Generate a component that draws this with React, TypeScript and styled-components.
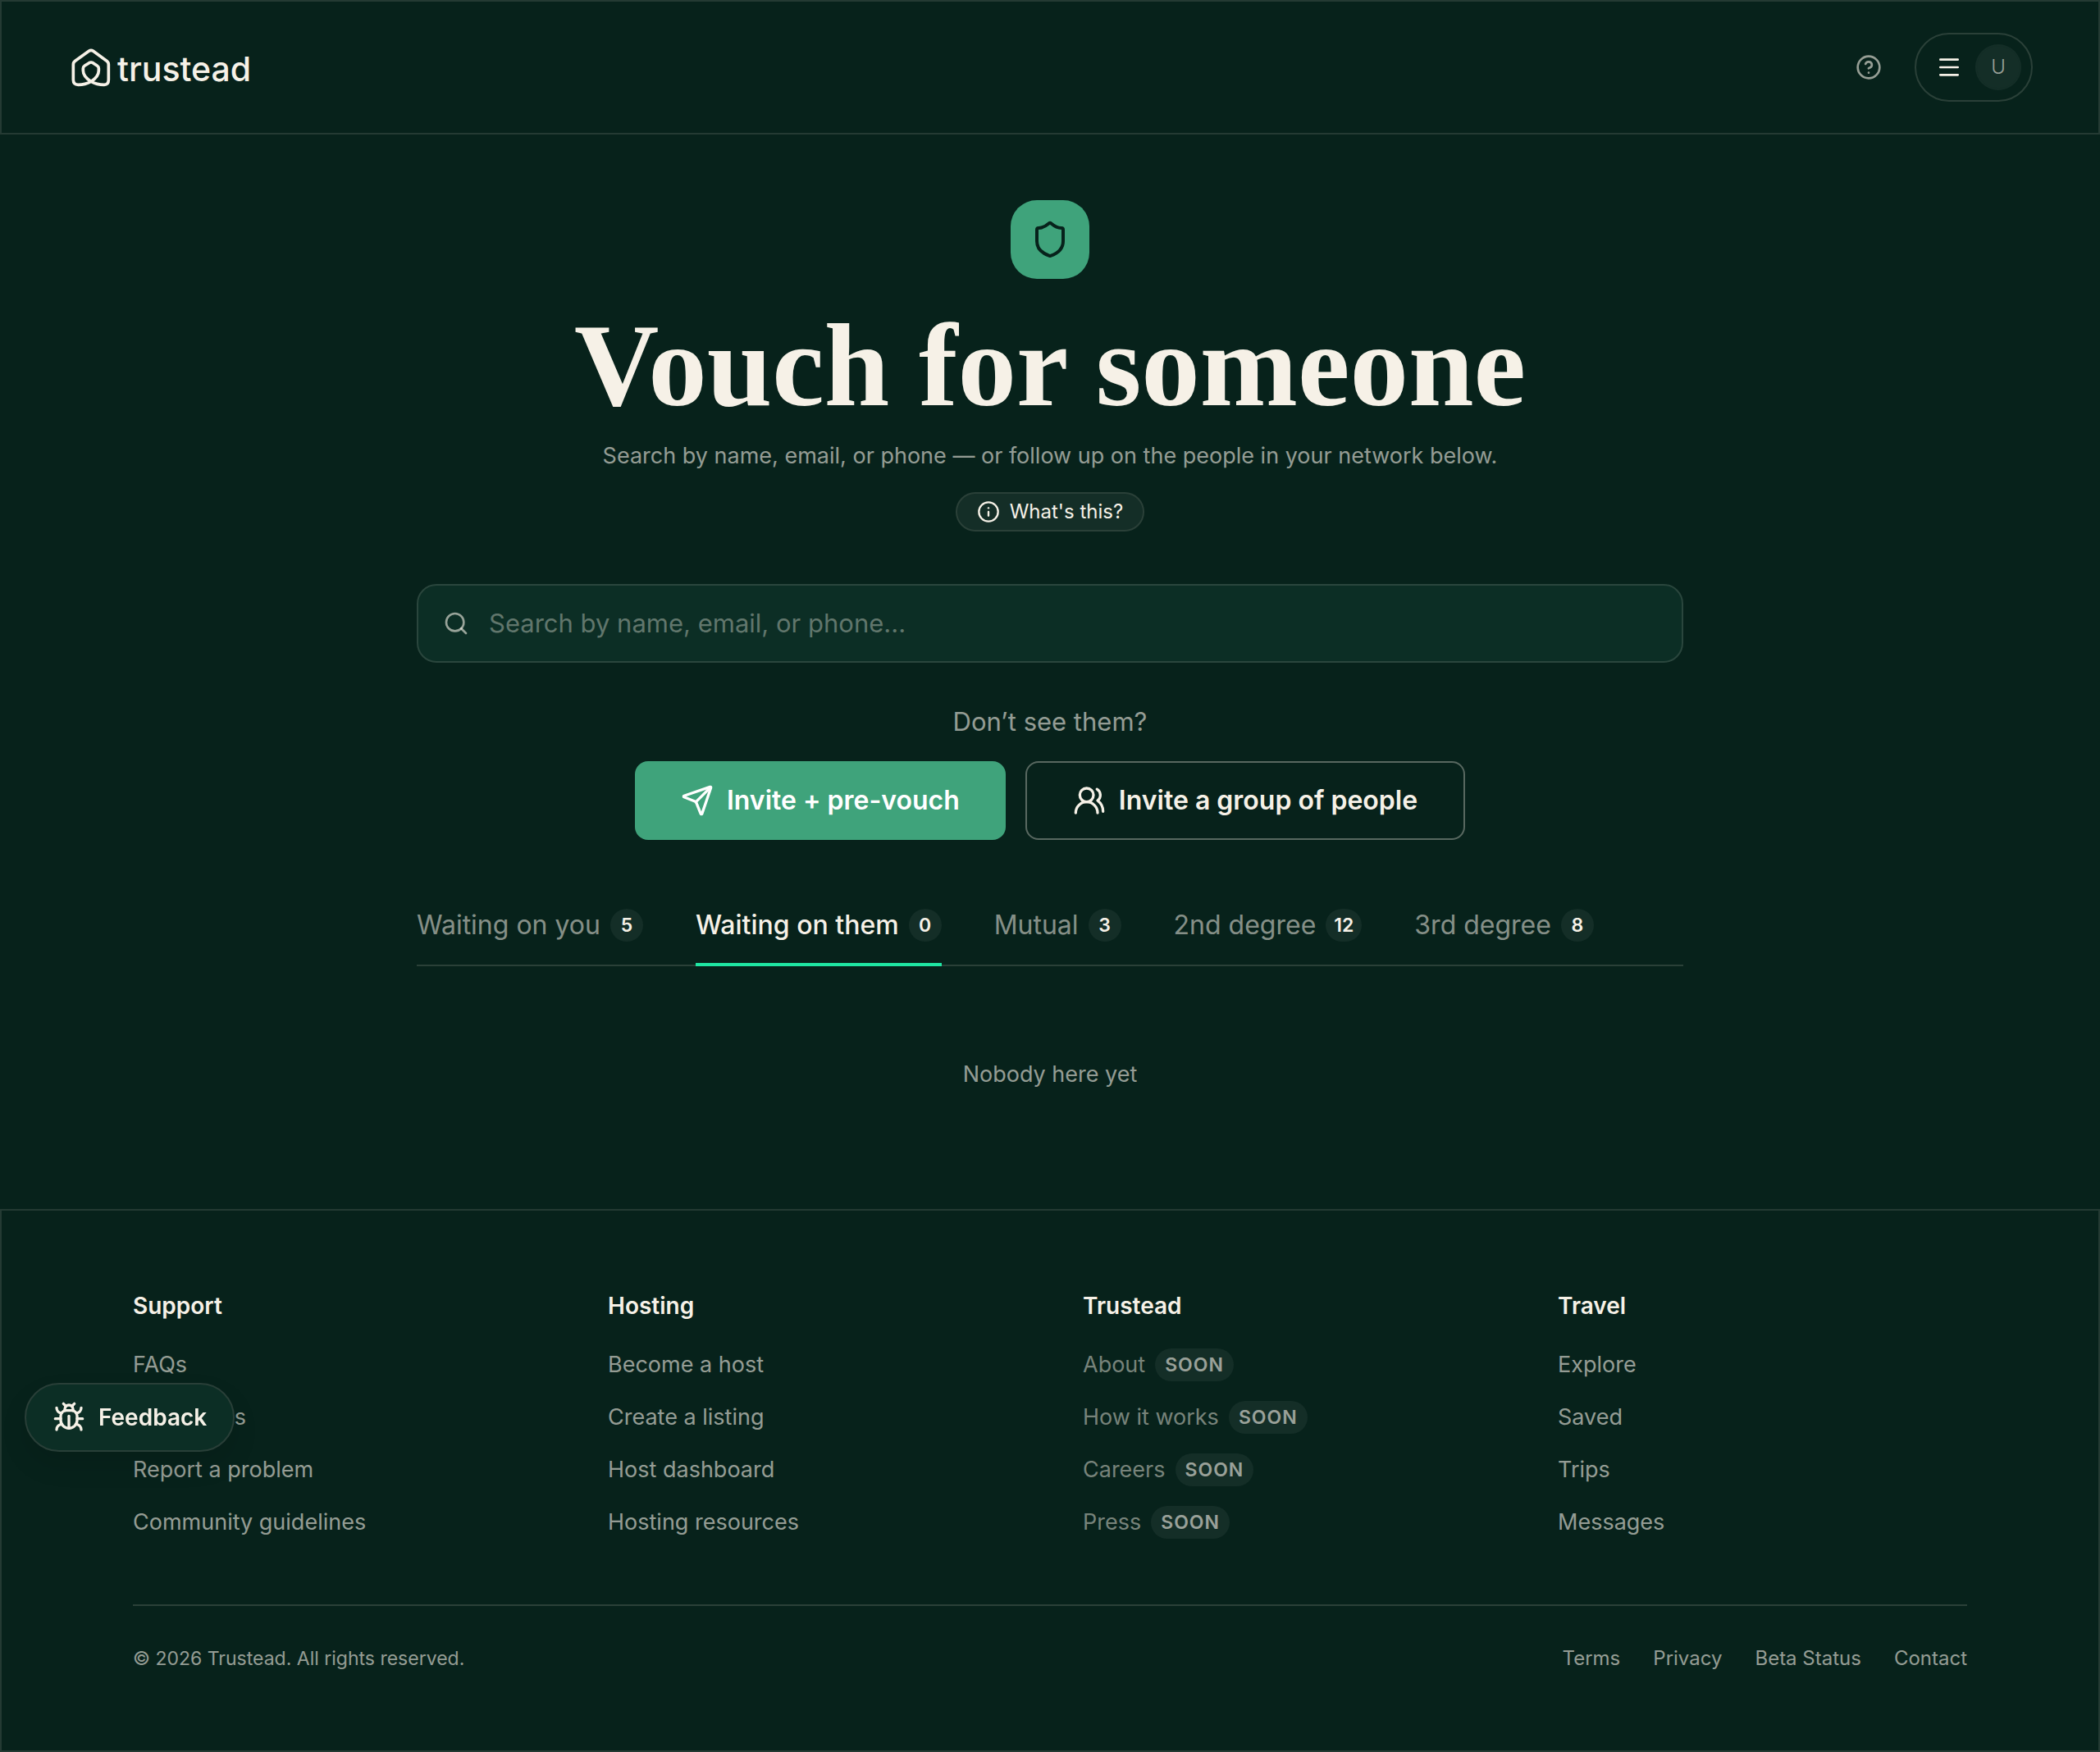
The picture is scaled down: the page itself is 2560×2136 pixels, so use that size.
import React, { useState } from "react";
import styled, { createGlobalStyle, css } from "styled-components";
import {
  Bug,
  CircleQuestionMark,
  Info,
  Menu,
  Search,
  Send,
  Shield,
  UsersRound,
} from "lucide-react";

const color = {
  page: "#07221b",
  surface: "#0c2e25",
  cream: "#f6f1e7",
  muted: "rgba(246, 241, 231, 0.6)",
  faint: "rgba(246, 241, 231, 0.48)",
  placeholder: "#61766c",
  line: "rgba(246, 241, 231, 0.12)",
  control: "rgba(246, 241, 231, 0.15)",
  lineStrong: "rgba(246, 241, 231, 0.34)",
  chip: "rgba(246, 241, 231, 0.06)",
  green: "#3fa37b",
  accent: "#1fe6a3",
};

const GlobalStyle = createGlobalStyle`
  *, *::before, *::after { box-sizing: border-box; }
  body {
    margin: 0;
    background: ${color.page};
    color: ${color.cream};
    font-family: Inter, "Open Sans", sans-serif;
    font-size: 27px;
    line-height: 40px;
  }
  button, input { font: inherit; color: inherit; }
  button { cursor: pointer; }
  svg { display: block; flex: none; }
`;

const Page = styled.div`
  display: flex;
  flex-direction: column;
  min-height: 100vh;
`;

const Header = styled.header`
  display: flex;
  align-items: center;
  justify-content: space-between;
  padding: 38px 80px 38px 85px;
  border: 2px solid ${color.line};
`;

const Brand = styled.a`
  display: flex;
  align-items: flex-end;
  gap: 8px;
  color: ${color.cream};
  text-decoration: none;
`;

const BrandName = styled.span`
  font-size: 41px;
  font-weight: 500;
  line-height: 44px;
`;

const HeaderActions = styled.div`
  display: flex;
  align-items: center;
  gap: 24px;
`;

const IconButton = styled.button`
  display: flex;
  padding: 16px;
  border: 0;
  border-radius: 32px;
  background: none;
  color: ${color.muted};
`;

const AccountButton = styled.button`
  display: flex;
  align-items: center;
  gap: 16px;
  padding: 12px 12px 12px 24px;
  border: 2px solid ${color.control};
  border-radius: 42px;
  background: none;
`;

const Avatar = styled.span`
  width: 56px;
  height: 56px;
  border: 2px solid ${color.chip};
  border-radius: 50%;
  background: ${color.chip};
  background-clip: padding-box;
  color: ${color.muted};
  font-size: 24px;
  font-weight: 300;
  line-height: 52px;
  text-align: center;
`;

const Main = styled.main`
  display: flex;
  flex: 1;
  flex-direction: column;
  width: 100%;
  max-width: 1544px;
  margin: 0 auto;
  padding: 80px 0 32px;
`;

const Hero = styled.section`
  display: flex;
  flex-direction: column;
  align-items: center;
  text-align: center;
`;

const HeroBadge = styled.div`
  display: grid;
  place-items: center;
  width: 96px;
  height: 96px;
  margin-bottom: 32px;
  border-radius: 32px;
  background: ${color.green};
  color: ${color.page};
`;

const Title = styled.h1`
  margin: 0 0 16px;
  font-family: "Liberation Serif", serif;
  font-size: 143px;
  font-weight: 700;
  line-height: 148px;
`;

const Lead = styled.p`
  margin: 0 0 24px;
  color: ${color.muted};
`;

const InfoButton = styled.button`
  display: flex;
  align-items: center;
  gap: 12px;
  height: 48px;
  padding: 0 24px;
  border: 2px solid ${color.control};
  border-radius: 24px;
  background: ${color.chip};
  background-clip: padding-box;
  font-size: 24px;
`;

const SearchField = styled.label`
  display: flex;
  align-items: center;
  gap: 24px;
  height: 96px;
  margin-top: 64px;
  padding: 0 30px;
  border: 2px solid #2a463d;
  border-radius: 24px;
  background: ${color.surface};
  color: ${color.muted};
`;

const SearchInput = styled.input`
  flex: 1;
  min-width: 0;
  padding: 0;
  border: 0;
  outline: 0;
  background: none;
  color: ${color.cream};
  font-size: 31px;
  &::placeholder {
    color: ${color.placeholder};
    opacity: 1;
  }
`;

const Prompt = styled.p`
  margin: 48px 0 24px;
  color: ${color.muted};
  font-size: 31px;
  line-height: 48px;
  text-align: center;
`;

const Actions = styled.div`
  display: flex;
  justify-content: center;
  gap: 24px;
`;

const ActionButton = styled.button<{ $primary?: boolean }>`
  display: flex;
  align-items: center;
  gap: 16px;
  height: 96px;
  padding: 0 56px;
  border: 2px solid ${color.lineStrong};
  border-radius: 16px;
  background: none;
  font-size: 32px;
  font-weight: 600;
  ${(p) =>
    p.$primary &&
    css`
      border: 0;
      background: ${color.green};
      color: #ffffff;
    `}
`;

const Tabs = styled.div`
  display: flex;
  gap: 64px;
  margin-top: 64px;
  border-bottom: 2px solid ${color.control};
`;

const Tab = styled.button<{ $active: boolean }>`
  display: flex;
  align-items: center;
  gap: 12px;
  margin-bottom: -2px;
  padding: 20px 0 26px;
  border: 0;
  border-bottom: 4px solid ${(p) => (p.$active ? color.accent : "transparent")};
  background: none;
  color: ${(p) => (p.$active ? color.cream : "rgba(246, 241, 231, 0.55)")};
  font-size: 32px;
  font-weight: ${(p) => (p.$active ? 500 : 400)};
  line-height: 40px;
`;

const Count = styled.span`
  min-width: 40px;
  padding: 0 10px;
  border-radius: 20px;
  background: ${color.chip};
  color: ${color.cream};
  font-size: 23px;
  font-weight: 600;
  text-align: center;
`;

const EmptyState = styled.p`
  margin: 0;
  padding: 112px 0;
  color: ${color.muted};
  text-align: center;
`;

const Footer = styled.footer`
  padding: 96px 160px;
  border: 2px solid ${color.line};
`;

const FooterColumns = styled.div`
  display: grid;
  grid-template-columns: repeat(4, 1fr);
  gap: 80px;
`;

const FooterHeading = styled.h2`
  margin: 0 0 32px;
  font-size: 28px;
  font-weight: 600;
  line-height: 40px;
`;

const LinkList = styled.ul`
  display: flex;
  flex-direction: column;
  gap: 24px;
  margin: 0;
  padding: 0;
  list-style: none;
`;

const LinkItem = styled.li`
  display: flex;
  align-items: center;
  gap: 12px;
  color: ${color.faint};
`;

const FooterLink = styled.a`
  color: ${color.muted};
  text-decoration: none;
`;

const SoonTag = styled.span`
  padding: 0 12px;
  border-radius: 20px;
  background: ${color.chip};
  color: ${color.muted};
  font-size: 23px;
  font-weight: 600;
  letter-spacing: 1px;
`;

const FooterBottom = styled.div`
  display: flex;
  justify-content: space-between;
  margin-top: 80px;
  padding-top: 48px;
  border-top: 2px solid ${color.control};
  color: ${color.muted};
  font-size: 23px;
  line-height: 32px;
`;

const LegalLinks = styled.nav`
  display: flex;
  gap: 40px;
  font-size: 24px;
`;

const FeedbackButton = styled.button`
  position: fixed;
  bottom: 366px;
  left: 30px;
  display: flex;
  align-items: center;
  gap: 16px;
  height: 84px;
  padding: 0 32px;
  border: 2px solid #293f38;
  border-radius: 42px;
  background: ${color.surface};
  box-shadow: 0 16px 32px rgba(0, 0, 0, 0.1);
  font-size: 28px;
  font-weight: 600;
`;

function LogoMark() {
  return (
    <svg width="48" height="48" viewBox="260 174 144 144" fill="none" aria-hidden="true">
      <path
        d="M332 298C318 306 300 310 285 310Q267 310 267 292V236Q267 228 274 223L324 187Q332 181 340 187L389 223Q396 228 396 236V292Q396 310 380 310C362 310 346 306 332 298C314 287 303 274 303 258V250Q303 244 308 241L325 230Q332 226 339 230L355 241Q360 244 360 250V258C360 274 350 287 332 298Z"
        stroke="currentColor"
        strokeWidth="11"
        strokeLinejoin="round"
      />
    </svg>
  );
}

const tabs = [
  { label: "Waiting on you", count: 5 },
  { label: "Waiting on them", count: 0 },
  { label: "Mutual", count: 3 },
  { label: "2nd degree", count: 12 },
  { label: "3rd degree", count: 8 },
];

const footerColumns = [
  { title: "Support", links: ["FAQs", "Contact us", "Report a problem", "Community guidelines"] },
  { title: "Hosting", links: ["Become a host", "Create a listing", "Host dashboard", "Hosting resources"] },
  { title: "Trustead", soon: true, links: ["About", "How it works", "Careers", "Press"] },
  { title: "Travel", links: ["Explore", "Saved", "Trips", "Messages"] },
];

const legalLinks = ["Terms", "Privacy", "Beta Status", "Contact"];

export default function App() {
  const [active, setActive] = useState(1);
  const [query, setQuery] = useState("");

  return (
    <Page>
      <GlobalStyle />
      <Header>
        <Brand href="#">
          <LogoMark />
          <BrandName>trustead</BrandName>
        </Brand>
        <HeaderActions>
          <IconButton aria-label="Help">
            <CircleQuestionMark size={32} />
          </IconButton>
          <AccountButton aria-label="Account menu">
            <Menu size={32} />
            <Avatar>U</Avatar>
          </AccountButton>
        </HeaderActions>
      </Header>

      <Main>
        <Hero>
          <HeroBadge>
            <Shield size={48} />
          </HeroBadge>
          <Title>Vouch for someone</Title>
          <Lead>Search by name, email, or phone — or follow up on the people in your network below.</Lead>
          <InfoButton>
            <Info size={28} />
            What's this?
          </InfoButton>
        </Hero>

        <SearchField>
          <Search size={32} />
          <SearchInput
            type="text"
            aria-label="Search people"
            placeholder="Search by name, email, or phone..."
            value={query}
            onChange={(e) => setQuery(e.target.value)}
          />
        </SearchField>

        <Prompt>Don’t see them?</Prompt>
        <Actions>
          <ActionButton $primary>
            <Send size={40} />
            Invite + pre-vouch
          </ActionButton>
          <ActionButton>
            <UsersRound size={40} />
            Invite a group of people
          </ActionButton>
        </Actions>

        <Tabs role="tablist">
          {tabs.map((tab, i) => (
            <Tab
              key={tab.label}
              role="tab"
              aria-selected={i === active}
              $active={i === active}
              onClick={() => setActive(i)}
            >
              {tab.label}
              <Count>{tab.count}</Count>
            </Tab>
          ))}
        </Tabs>
        <EmptyState>Nobody here yet</EmptyState>
      </Main>

      <Footer>
        <FooterColumns>
          {footerColumns.map((column) => (
            <nav key={column.title} aria-label={column.title}>
              <FooterHeading>{column.title}</FooterHeading>
              <LinkList>
                {column.links.map((link) => (
                  <LinkItem key={link}>
                    {column.soon ? (
                      <>
                        {link}
                        <SoonTag>SOON</SoonTag>
                      </>
                    ) : (
                      <FooterLink href="#">{link}</FooterLink>
                    )}
                  </LinkItem>
                ))}
              </LinkList>
            </nav>
          ))}
        </FooterColumns>
        <FooterBottom>
          <span>© 2026 Trustead. All rights reserved.</span>
          <LegalLinks aria-label="Legal">
            {legalLinks.map((link) => (
              <FooterLink key={link} href="#">
                {link}
              </FooterLink>
            ))}
          </LegalLinks>
        </FooterBottom>
      </Footer>

      <FeedbackButton>
        <Bug size={40} />
        Feedback
      </FeedbackButton>
    </Page>
  );
}
